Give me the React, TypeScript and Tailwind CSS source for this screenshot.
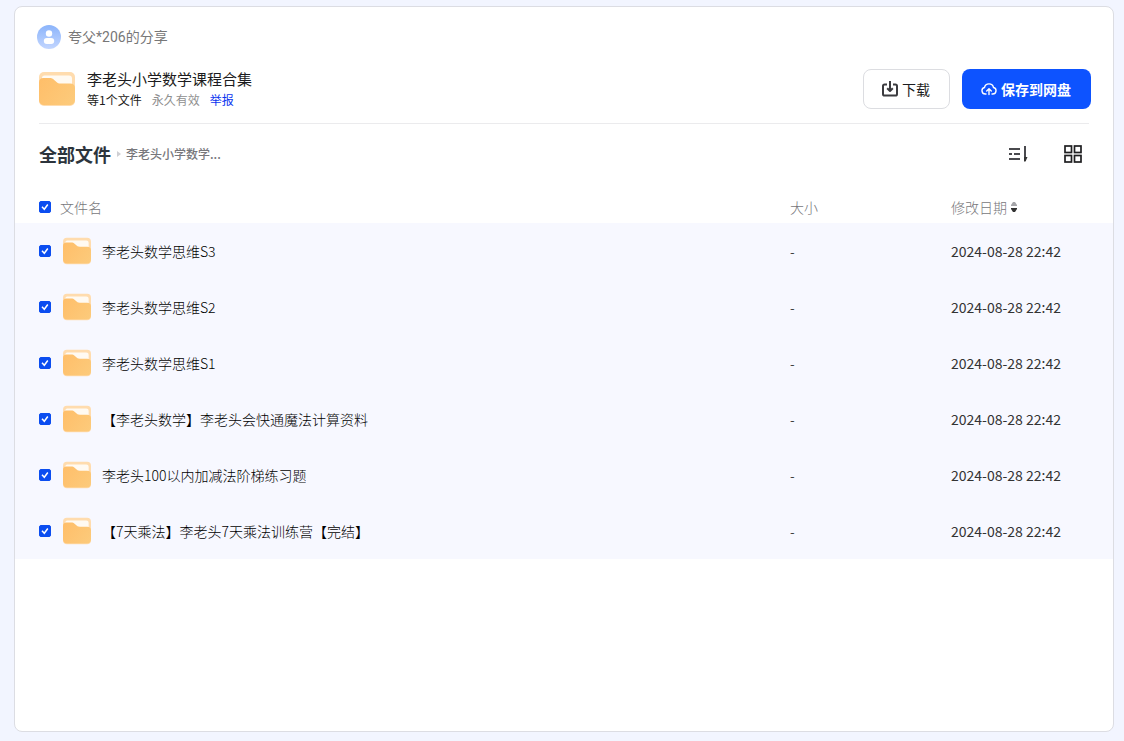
import { useState } from 'react'

type FileItem = {
  id: number
  name: string
  size: string
  date: string
}

const FILES: FileItem[] = [
  { id: 1, name: '李老头数学思维S3', size: '-', date: '2024-08-28 22:42' },
  { id: 2, name: '李老头数学思维S2', size: '-', date: '2024-08-28 22:42' },
  { id: 3, name: '李老头数学思维S1', size: '-', date: '2024-08-28 22:42' },
  {
    id: 4,
    name: '【李老头数学】李老头会快通魔法计算资料',
    size: '-',
    date: '2024-08-28 22:42',
  },
  {
    id: 5,
    name: '李老头100以内加减法阶梯练习题',
    size: '-',
    date: '2024-08-28 22:42',
  },
  {
    id: 6,
    name: '【7天乘法】李老头7天乘法训练营【完结】',
    size: '-',
    date: '2024-08-28 22:42',
  },
]

const FolderIcon = ({ className }: { className: string }) => (
  <svg className={className} viewBox="0 0 36 34" fill="none" aria-hidden="true">
    <defs>
      <linearGradient id="folder-front" x1="0" y1="6" x2="36" y2="34" gradientUnits="userSpaceOnUse">
        <stop stopColor="#ffbe69" />
        <stop offset="1" stopColor="#fccb7c" />
      </linearGradient>
    </defs>
    <rect width="36" height="34" rx="5" fill="#ffdcae" />
    <path d="M5.500 3.500H30a3 3 0 0 1 3 3V15H10L3 8V6a2.500 2.500 0 0 1 2.500-2.500z" fill="#fffaf2" />
    <path
      d="M0 10.500C0 7.500 1.500 6 4.500 6h6c2 0 3.300.6 4.700 1.900l2.300 2.100c1.200 1.100 2.200 1.500 4 1.500H31c3.500 0 5 1.500 5 4.500v11.500c0 3.500-2 5.500-5.500 5.500h-25C2 33 0 31 0 27.500z"
      fill="url(#folder-front)"
    />
  </svg>
)

const AvatarIcon = () => (
  <svg className="size-6 shrink-0" viewBox="0 0 24 24" aria-hidden="true">
    <defs>
      <linearGradient id="avatar-bg" x1="0" y1="0" x2="0" y2="1">
        <stop stopColor="#8bb4fb" />
        <stop offset="1" stopColor="#c3d6fe" />
      </linearGradient>
    </defs>
    <circle cx="12" cy="12" r="12" fill="url(#avatar-bg)" />
    <circle cx="12" cy="8.500" r="3.200" fill="#fff" />
    <rect x="6.800" y="13" width="10.400" height="6" rx="3" fill="#fff" />
  </svg>
)

const DownloadIcon = () => (
  <svg
    className="size-4"
    viewBox="0 0 16 16"
    fill="none"
    stroke="#3b3b3f"
    strokeWidth="2"
    strokeLinejoin="round"
    aria-hidden="true"
  >
    <path d="M5 3.500H2.600A1.600 1.600 0 0 0 1 5.100v7.800a1.600 1.600 0 0 0 1.600 1.600h10.800a1.600 1.600 0 0 0 1.600-1.600V5.100a1.600 1.600 0 0 0-1.600-1.600H11" />
    <path d="M8 0v9.500M5.200 7.200 8 10l2.800-2.800" />
  </svg>
)

const CloudUploadIcon = () => (
  <svg
    className="size-4"
    viewBox="0 0 16 16"
    fill="none"
    stroke="currentColor"
    strokeWidth="1.400"
    strokeLinecap="round"
    strokeLinejoin="round"
    aria-hidden="true"
  >
    <path d="M5 13H4.300A3.300 3.300 0 0 1 3.500 6.500 4.600 4.600 0 0 1 12.500 6.500 3.300 3.300 0 0 1 11.700 13H11" />
    <path d="M8 13.500V8M5.700 10 8 7.700l2.300 2.300" />
  </svg>
)

const SortIcon = () => (
  <svg className="h-4 w-5" viewBox="0 0 20 16" fill="none" stroke="#4a4a4e" strokeWidth="2" aria-hidden="true">
    <path d="M1 3h11M1 8h3M6 8h6M1 13h11M17 0v15" />
    <path d="M16 11h3.500l-2 4.500H16z" fill="#333" stroke="none" />
  </svg>
)

const GridIcon = () => (
  <svg className="size-[18px]" viewBox="0 0 18 18" fill="none" stroke="#1f1f21" strokeWidth="1.700" aria-hidden="true">
    <rect x="1" y="1" width="6.500" height="6.500" />
    <rect x="10.500" y="1" width="6.500" height="6.500" />
    <rect x="1" y="10.500" width="6.500" height="6.500" />
    <rect x="10.500" y="10.500" width="6.500" height="6.500" />
  </svg>
)

type CheckboxProps = {
  label: string
  checked: boolean
  onChange: () => void
}

const Checkbox = ({ label, checked, onChange }: CheckboxProps) => (
  <span className="grid size-3 shrink-0">
    <input
      type="checkbox"
      aria-label={label}
      checked={checked}
      onChange={onChange}
      className="col-start-1 row-start-1 size-3 appearance-none rounded-xs border border-gray-300 bg-white checked:border-[#0b4df0] checked:bg-[#0b4df0]"
    />
    {checked && (
      <svg
        className="pointer-events-none col-start-1 row-start-1 size-3"
        viewBox="0 0 12 12"
        fill="none"
        stroke="#fff"
        strokeWidth="1.500"
        aria-hidden="true"
      >
        <path d="M3 5.800 5.300 8.300l3.500-4.800" />
      </svg>
    )}
  </span>
)

export default function App() {
  const [selected, setSelected] = useState<number[]>(FILES.map((f) => f.id))

  const allSelected = selected.length === FILES.length

  const toggleAll = () => {
    setSelected(allSelected ? [] : FILES.map((f) => f.id))
  }

  const toggle = (id: number) => {
    setSelected((prev) =>
      prev.includes(id) ? prev.filter((x) => x !== id) : [...prev, id],
    )
  }

  return (
    <div className="flex min-h-screen flex-col bg-[#f2f5ff] pt-1.5 pr-2.5 pb-[9px] pl-3.5 font-['Noto_Sans_CJK_SC',sans-serif] text-[#1c1c20]">
      <main className="flex-1 rounded-lg border border-[#dcdde3] bg-white">
        {/* Share info */}
        <header className="px-[22px] pt-[18px]">
          <div className="flex items-center gap-[7px]">
            <AvatarIcon />
            <span className="font-[Roboto,'Noto_Sans_CJK_SC',sans-serif] text-sm leading-[21px] text-[#777]">
              夸父*206的分享
            </span>
          </div>
          <div className="mx-0.5 mt-[19px] border-b border-[#ebebed] pb-[13px]">
            <div className="-mr-0.5 flex items-center">
              <FolderIcon className="h-[34px] w-9 shrink-0" />
              <div className="ml-3 min-w-0 flex-1">
                <h1 className="truncate text-[15px] leading-[21px]">
                  李老头小学数学课程合集
                </h1>
                <div className="flex gap-2.5 text-xs leading-[21px]">
                  <span>等1个文件</span>
                  <span className="text-[#8f8f8f]">永久有效</span>
                  <a href="#report" className="text-[#0b35f0]">
                    举报
                  </a>
                </div>
              </div>
              <div className="flex gap-3">
                <button
                  type="button"
                  className="flex h-10 items-center gap-1 rounded-lg border border-[#dcdde1] pr-[19px] pl-[18px] text-sm"
                >
                  <DownloadIcon />
                  下载
                </button>
                <button
                  type="button"
                  className="flex h-10 items-center gap-1 rounded-lg bg-[#0d53ff] pr-5 pl-[19px] text-sm font-bold text-white"
                >
                  <CloudUploadIcon />
                  保存到网盘
                </button>
              </div>
            </div>
          </div>
        </header>

        {/* Breadcrumb and view controls */}
        <div className="flex h-[60px] items-center justify-between pr-[31px] pl-6">
          <nav className="flex items-center">
            <a href="#all" className="text-lg font-bold text-[#2c343c]">
              全部文件
            </a>
            <svg className="mr-[5px] ml-1.5 h-1.5 w-1" viewBox="0 0 4 6" aria-hidden="true">
              <path d="M0 0l4 3-4 3z" fill="#cfcfd3" />
            </svg>
            <span className="text-xs font-medium text-[#77777b]">
              李老头小学数学...
            </span>
          </nav>
          <div className="flex items-center gap-9">
            <button type="button" aria-label="排序">
              <SortIcon />
            </button>
            <button type="button" aria-label="切换视图">
              <GridIcon />
            </button>
          </div>
        </div>

        {/* Files */}
        <table className="mt-[7px] w-full table-fixed text-left text-sm leading-[21px]">
          <thead>
            <tr className="h-8 text-[#77777b]">
              <th className="p-0 pl-6 font-light">
                <div className="flex items-center gap-[9px]">
                  <Checkbox
                    label="全选"
                    checked={allSelected}
                    onChange={toggleAll}
                  />
                  文件名
                </div>
              </th>
              <th className="w-[161px] p-0 font-light">大小</th>
              <th className="w-[162px] p-0 font-light">
                <button type="button" className="flex items-center gap-1">
                  修改日期
                  <svg className="h-2.5 w-1.5" viewBox="0 0 6 10" aria-hidden="true">
                    <path d="M0 4V3l2-3h2l2 3v1z" fill="#a5a5a9" />
                    <path d="M0 6h6v1l-2 3H2L0 7z" fill="#333" />
                  </svg>
                </button>
              </th>
            </tr>
          </thead>
          <tbody className="text-black">
            {FILES.map((file) => (
              <tr
                key={file.id}
                className={
                  selected.includes(file.id) ? 'h-14 bg-[#f7f8ff]' : 'h-14'
                }
              >
                <td className="p-0 pl-6">
                  <div className="flex items-center">
                    <Checkbox
                      label={file.name}
                      checked={selected.includes(file.id)}
                      onChange={() => toggle(file.id)}
                    />
                    <FolderIcon className="mr-[11px] ml-3 h-7 w-7 shrink-0" />
                    <span className="truncate font-light">{file.name}</span>
                  </div>
                </td>
                <td className="p-0 font-light">{file.size}</td>
                <td className="p-0 text-[#333]">{file.date}</td>
              </tr>
            ))}
          </tbody>
        </table>
      </main>
    </div>
  )
}
